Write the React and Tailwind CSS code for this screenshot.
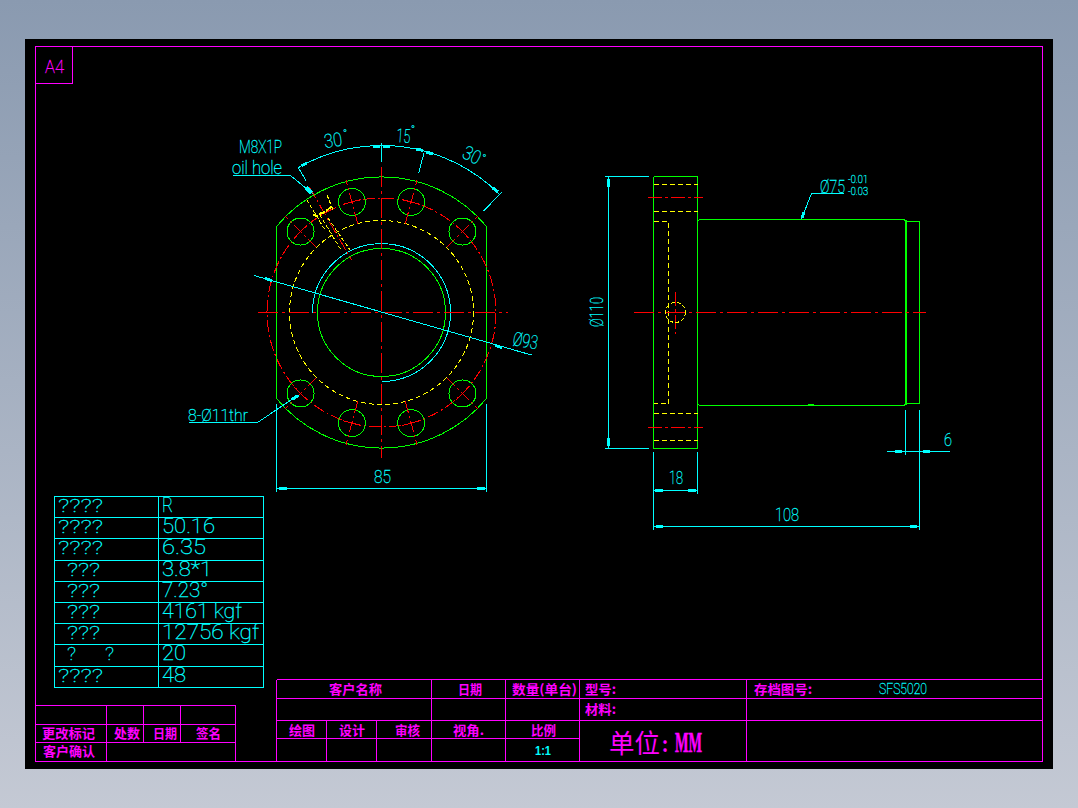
import React from "react";

const GREEN = "#00ff00";
const RED = "#ff0000";
const YELLOW = "#ffff00";
const CYAN = "#00ffff";
const MAGENTA = "#ff00ff";
const CX = 381.5;
const CY = 312.5;
const DASHDOT = "20 4 3 4";
const SHORT_DASHDOT = "12 3 2 3";
const DASH = "5 3";

// angle is measured clockwise from straight up
function polar(angle, r, cx = CX, cy = CY) {
  const a = (angle * Math.PI) / 180;
  return [cx + r * Math.sin(a), cy - r * Math.cos(a)];
}

function Ln({ a, c = GREEN, w = 1, dash }) {
  return <line x1={a[0]} y1={a[1]} x2={a[2]} y2={a[3]} stroke={c} strokeWidth={w} strokeDasharray={dash} />;
}

function Latin({ x, y, size = 15, len, c = CYAN, rot, anchor, children }) {
  return (
    <text
      x={x}
      y={y}
      fontSize={size}
      fill={c}
      stroke={c}
      strokeWidth={0.3}
      textLength={len}
      lengthAdjust="spacingAndGlyphs"
      textAnchor={anchor}
      transform={rot ? `rotate(${rot} ${x} ${y})` : undefined}
      className="font-['Roboto',sans-serif] font-thin"
    >
      {children}
    </text>
  );
}

function Cjk({ x, y, len, size = 13, c = MAGENTA, thin, children }) {
  return (
    <text
      x={x}
      y={y}
      fontSize={size}
      fill={c}
      textLength={len}
      lengthAdjust="spacingAndGlyphs"
      className={thin ? "font-['Noto_Sans_CJK_SC',sans-serif] font-normal" : "font-['Noto_Sans_CJK_SC',sans-serif] font-bold"}
    >
      {children}
    </text>
  );
}

const holes = [-45, -15, 15, 45, 135, 165, 195, 225];

function FrontView() {
  const [tlx, tly] = [276.5, 226.5];
  return (
    <g fill="none">
      {/* flange outline */}
      <path d={`M${tlx} ${tly} A136 136 0 0 1 486.5 ${tly} V398.5 A136 136 0 0 1 ${tlx} 398.5 Z`} stroke={GREEN} />
      <circle cx={CX} cy={CY} r={64} stroke={GREEN} />
      <path d={`M312.5 312.5 A69 69 0 1 1 ${CX} 381.5`} stroke={CYAN} />
      <circle cx={CX} cy={CY} r={92} stroke={YELLOW} strokeDasharray={DASH} />
      <circle cx={CX} cy={CY} r={114.5} stroke={RED} strokeDasharray={SHORT_DASHDOT} />
      <Ln a={[257.5, CY, 507.5, CY]} c={RED} dash={DASHDOT} />
      <Ln a={[CX, 166.5, CX, 457.5]} c={RED} dash={DASHDOT} />

      {holes.map((deg) => {
        const [hx, hy] = polar(deg, 114.5);
        const p1 = polar(deg, 92);
        const p2 = polar(deg, 137);
        const t1 = polar(deg + 90, 9, hx, hy);
        const t2 = polar(deg - 90, 9, hx, hy);
        return (
          <g key={deg}>
            <circle cx={hx} cy={hy} r={13.5} stroke={GREEN} />
            <Ln a={[...p1, ...p2]} c={RED} dash="12 3 2 3" />
            <Ln a={[...t1, ...t2]} c={RED} />
          </g>
        );
      })}

      {/* oil hole, 30 degrees off the vertical */}
      <Ln a={[309.5, 187.5, 351.5, 260]} c={RED} dash="12 3 2 3" />
      <Ln a={[307, 200, 325, 230]} c={YELLOW} dash="4 2" />
      <Ln a={[327, 195, 333, 210]} c={YELLOW} dash="4 2" />
      <Ln a={[320, 215, 341, 250]} c={YELLOW} dash="4 2" />
      <Ln a={[328, 218, 350, 250]} c={YELLOW} dash="4 2" />
      <path d="M313 215 L318 216 M319 214 L325 212 M326 211 L331 207" stroke={YELLOW} strokeWidth={2} />

      {/* angle dimensions */}
      <path d="M298.5 167.5 A167 167 0 0 1 499.6 194.4" stroke={CYAN} />
      <Ln a={[298, 167, 306.5, 181.5]} c={CYAN} />
      <Ln a={[381.5, 143, 381.5, 162]} c={CYAN} />
      <Ln a={[424, 153, 418.5, 173.5]} c={CYAN} />
      <Ln a={[501.5, 192.5, 483.5, 211]} c={CYAN} />
      <Ln a={[302, 165.5, 307, 163]} c={CYAN} w={3} />
      <Ln a={[373, 146, 380, 146]} c={CYAN} w={3} />
      <Ln a={[383, 146, 390, 146]} c={CYAN} w={3} />
      <Ln a={[416, 149, 423, 150.5]} c={CYAN} w={3} />
      <Ln a={[426, 152, 433, 154]} c={CYAN} w={3} />
      <Ln a={[493, 188, 498, 192]} c={CYAN} w={3} />

      {/* oil hole leader */}
      <path d="M232.5 175.5 H290.5 L313.5 194.5" stroke={CYAN} />
      <Ln a={[306, 187.5, 311.5, 193]} c={CYAN} w={4} />

      {/* pitch circle dimension */}
      <Ln a={[254, 275.5, 531.5, 355]} c={CYAN} />
      <Ln a={[265, 278.5, 272, 280.5]} c={CYAN} w={3} />
      <Ln a={[495, 345.5, 502, 347.5]} c={CYAN} w={3} />

      {/* hole callout */}
      <path d="M188.5 422.5 H257.5 L298.5 395" stroke={CYAN} />
      <Ln a={[292, 399.5, 298, 395.5]} c={CYAN} w={3} />

      {/* width 85 */}
      <path d="M276.5 404 V492 M486.5 404 V492 M276.5 488.5 H486.5" stroke={CYAN} />
      <Ln a={[279, 488.5, 287, 488.5]} c={CYAN} w={3} />
      <Ln a={[477, 488.5, 485, 488.5]} c={CYAN} w={3} />
    </g>
  );
}

function SideView() {
  return (
    <g fill="none">
      <path d="M653.5 176.5 H697.5 M653.5 176.5 V448.5 H697.5 V176.5" stroke={GREEN} />
      <path d="M697.5 221.5 L699.5 219.5 H904 L906 221.5 M697.5 403.5 L699.5 405.5 H904 L906 403.5" stroke={GREEN} />
      <Ln a={[905.5, 220, 905.5, 405]} c={GREEN} w={2} />
      <path d="M906 221.5 H919.5 V403.5 H906" stroke={GREEN} />
      <Ln a={[808, 404.5, 814, 404.5]} c={GREEN} />

      <Ln a={[653.5, 184.5, 697.5, 184.5]} c={YELLOW} dash={DASH} />
      <Ln a={[653.5, 211.5, 697.5, 211.5]} c={YELLOW} dash={DASH} />
      <Ln a={[653.5, 413.5, 697.5, 413.5]} c={YELLOW} dash={DASH} />
      <Ln a={[653.5, 440.5, 697.5, 440.5]} c={YELLOW} dash={DASH} />
      <path d="M653.5 221.5 H668.5 V403.5 H653.5" stroke={YELLOW} strokeDasharray={DASH} />
      <Ln a={[648, 197.5, 703, 197.5]} c={RED} dash="14 3 3 3" />
      <Ln a={[648, 427.5, 703, 427.5]} c={RED} dash="14 3 3 3" />

      <Ln a={[634, CY, 926, CY]} c={RED} dash={DASHDOT} />
      <Ln a={[675.5, 292, 675.5, 334]} c={RED} dash="14 3 3 3" />
      <circle cx={675.5} cy={CY} r={10} stroke={YELLOW} strokeDasharray="4 2" />

      {/* 110 */}
      <path d="M605 176.5 H649 M605 448.5 H649 M608.5 176.5 V448.5" stroke={CYAN} />
      <Ln a={[608.5, 179, 608.5, 187]} c={CYAN} w={3} />
      <Ln a={[608.5, 438, 608.5, 446]} c={CYAN} w={3} />

      {/* 75 leader */}
      <path d="M843.5 193.5 H811.5 L801.5 219" stroke={CYAN} />
      <Ln a={[804, 212, 802, 218]} c={CYAN} w={3} />

      {/* 18 */}
      <path d="M653.5 452 V529.5 M697.5 452 V493.5 M653.5 490.5 H697.5" stroke={CYAN} />
      <Ln a={[655, 490, 663, 490]} c={CYAN} w={3} />
      <Ln a={[688, 490, 696, 490]} c={CYAN} w={3} />

      {/* 108 */}
      <path d="M919.5 409.5 V529.5 M653.5 526.5 H919.5" stroke={CYAN} />
      <Ln a={[656, 526.5, 663, 526.5]} c={CYAN} w={3} />
      <Ln a={[910, 526.5, 917, 526.5]} c={CYAN} w={3} />

      {/* 6 */}
      <path d="M905.5 410 V455 M887 451.5 H950" stroke={CYAN} />
      <Ln a={[895, 451.5, 902, 451.5]} c={CYAN} w={3} />
      <Ln a={[923, 451.5, 930, 451.5]} c={CYAN} w={3} />
    </g>
  );
}

function BallTable() {
  const rowY = [496.5, 517.5, 538.5, 560.5, 581.5, 602.5, 623.5, 644.5, 666.5, 687.5];
  const rows = [
    ["????", 58, 45, "R", 11],
    ["????", 58, 45, "50.16", 53],
    ["????", 58, 45, "6.35", 44],
    ["???", 67, 33, "3.8*1", 50],
    ["???", 67, 33, "7.23°", 46],
    ["???", 67, 33, "4161 kgf", 80],
    ["???", 67, 33, "12756 kgf", 97],
    ["?", 67, 9, "20", 24],
    ["????", 58, 45, "48", 24],
  ];
  return (
    <g fill="none">
      {rowY.map((y) => (
        <Ln key={y} a={[54, y, 264, y]} c={CYAN} />
      ))}
      <Ln a={[54.5, 496.5, 54.5, 687.5]} c={CYAN} />
      <Ln a={[158.5, 496.5, 158.5, 687.5]} c={CYAN} />
      <Ln a={[263.5, 496.5, 263.5, 687.5]} c={CYAN} />
      {rows.map((r, i) => (
        <g key={i}>
          <Latin x={r[1]} y={rowY[i] + 15} size={19} len={r[2]}>{r[0]}</Latin>
          <Latin x={162} y={rowY[i] + 15} size={20} len={r[4]}>{r[3]}</Latin>
        </g>
      ))}
      <Latin x={105} y={659.5} size={19} len={9}>?</Latin>
    </g>
  );
}

function RevisionBlock() {
  return (
    <g fill="none">
      <path d="M36 705.5 H235.5 V761.5 M36 724.5 H235.5 M36 742.5 H235.5 M106.5 705.5 V761.5 M143.5 705.5 V742.5 M180.5 705.5 V742.5" stroke={MAGENTA} />
      <Cjk x={42} y={738} len={53}>更改标记</Cjk>
      <Cjk x={114} y={738} len={26}>处数</Cjk>
      <Cjk x={153} y={738} len={24}>日期</Cjk>
      <Cjk x={196} y={738} len={25}>签名</Cjk>
      <Cjk x={43} y={756} len={52}>客户确认</Cjk>
    </g>
  );
}

function TitleBlock() {
  return (
    <g fill="none">
      <path
        d="M276.5 679.5 H1042 M276.5 698.5 H1042 M276.5 720.5 H1042 M276.5 738.5 H579.5 M276.5 679.5 V761.5 M431.5 679.5 V761.5 M505.5 679.5 V761.5 M579.5 679.5 V761.5 M746.5 679.5 V761.5 M326.5 720.5 V761.5 M376.5 720.5 V761.5"
        stroke={MAGENTA}
      />
      <Cjk x={329} y={694} len={53}>客户名称</Cjk>
      <Cjk x={458} y={694} len={24}>日期</Cjk>
      <Cjk x={512} y={694} len={65}>数量(单台)</Cjk>
      <Cjk x={585} y={694} len={31}>型号:</Cjk>
      <Cjk x={585} y={714} len={31}>材料:</Cjk>
      <Cjk x={754} y={694} len={58}>存档图号:</Cjk>
      <Cjk x={289} y={735} len={26}>绘图</Cjk>
      <Cjk x={339} y={735} len={26}>设计</Cjk>
      <Cjk x={395} y={735} len={25}>审核</Cjk>
      <Cjk x={453} y={735} len={31}>视角.</Cjk>
      <Cjk x={531} y={735} len={25}>比例</Cjk>
      <text x={535} y={755} fontSize={13} fill={CYAN} textLength={16} lengthAdjust="spacingAndGlyphs" className="font-['Liberation_Sans',sans-serif] font-bold">1:1</text>
      <Cjk x={609} y={753} len={51} size={26} thin>单位</Cjk>
      <Cjk x={662} y={752} len={6} size={20}>:</Cjk>
      <text x={675} y={752} fontSize={29} fill={MAGENTA} stroke={MAGENTA} strokeWidth={0.6} textLength={27} lengthAdjust="spacingAndGlyphs" className="font-['Liberation_Serif',serif] font-bold">MM</text>
      <Latin x={879} y={693.5} size={15} len={48}>SFS5020</Latin>
    </g>
  );
}

function Labels() {
  return (
    <g>
      <Latin x={239} y={153} size={18} len={43}>M8X1P</Latin>
      <Latin x={232} y={174} size={18} len={50}>oil hole</Latin>
      <Latin x={325} y={148} size={19} len={18} rot={-8}>30</Latin>
      <Latin x={343} y={137} size={10} len={4}>°</Latin>
      <Latin x={396} y={142} size={19} len={14} rot={4}>15</Latin>
      <Latin x={411} y={133} size={10} len={4}>°</Latin>
      <Latin x={461} y={157} size={19} len={18} rot={26}>30</Latin>
      <Latin x={480} y={160} size={10} len={4} rot={26}>°</Latin>
      <Latin x={512} y={345} size={19} len={25} rot={10}>Ø93</Latin>
      <Latin x={188} y={421} size={17} len={60}>8-Ø11thr</Latin>
      <Latin x={374} y={483} size={19} len={17}>85</Latin>
      <Latin x={603} y={327} size={19} len={30} rot={-90}>Ø110</Latin>
      <Latin x={820} y={193} size={19} len={25}>Ø75</Latin>
      <Latin x={848} y={183} size={10} len={20}>-0.01</Latin>
      <Latin x={848} y={195} size={10} len={20}>-0.03</Latin>
      <Latin x={669} y={484} size={19} len={14}>18</Latin>
      <Latin x={775} y={521} size={19} len={24}>108</Latin>
      <Latin x={944} y={446} size={19} len={8}>6</Latin>
    </g>
  );
}

export default function App() {
  return (
    <div className="w-full h-screen overflow-hidden bg-linear-to-b from-[#8a9ab0] to-[#c4c9d4] pt-[39px] pl-[25px]">
      <div className="w-[1028px] h-[730px] bg-black">
        <svg viewBox="25 39 1028 730" width="1028" height="730" shapeRendering="crispEdges" className="block">
          {/* sheet frame */}
          <g fill="none" stroke={MAGENTA}>
            <rect x="35.5" y="46.5" width="1007" height="715" />
            <path d="M35.5 83.5 H72.5 V46.5" />
          </g>
          <Latin x={45} y={73} size={18} len={19} c={MAGENTA}>A4</Latin>
          <FrontView />
          <SideView />
          <Labels />
          <BallTable />
          <RevisionBlock />
          <TitleBlock />
        </svg>
      </div>
    </div>
  );
}
